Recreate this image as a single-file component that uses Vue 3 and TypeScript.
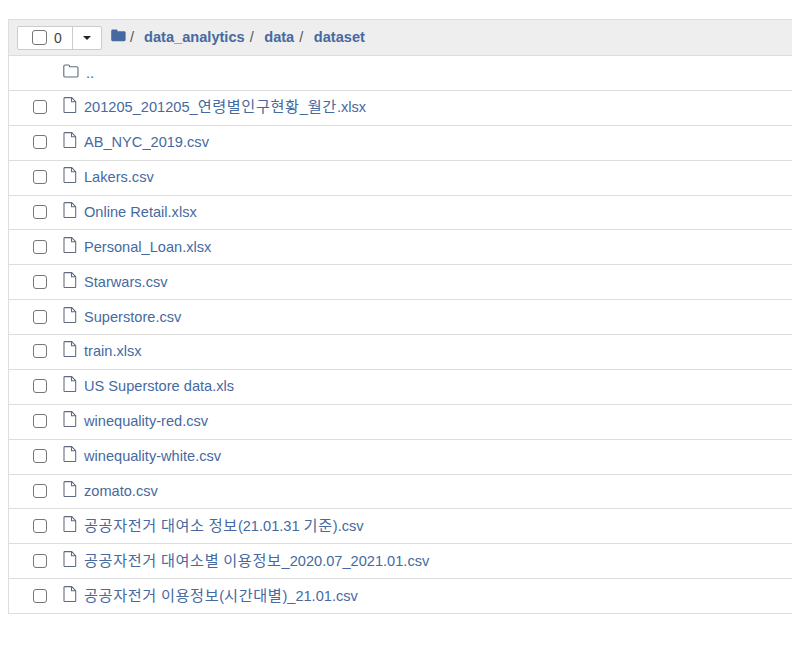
<template>
  <div class="page">
    <div class="tree-list">
      <div class="list-header">
        <div class="select-box">
          <span class="select-count">
            <span class="check big"></span>
            <span class="count">0</span>
          </span>
          <span class="select-caret"><i class="caret"></i></span>
        </div>
        <div class="crumbs">
          <svg class="crumb-icon" viewBox="0 0 15 13" width="15" height="13">
            <path d="M1.6 .5h3.6c.8 0 1.4.6 1.4 1.4v.3h6.6c.8 0 1.4.6 1.4 1.4v7.2c0 .8-.6 1.4-1.4 1.4H1.6C.8 12.2.2 11.6.2 10.8V1.9C.2 1.1.8.5 1.6.5z" fill="#466a9f" />
          </svg>
          <span class="slash first">/</span>
          <template v-for="(part, i) in crumbs" :key="part">
            <a class="crumb">{{ part }}</a>
            <span v-if="i < crumbs.length - 1" class="slash">/</span>
          </template>
        </div>
      </div>

      <div class="row">
        <span class="check-cell"></span>
        <svg class="item-icon folder" viewBox="0 0 16 14" width="16" height="14">
          <path d="M2 1h3.4c.7 0 1.2.5 1.2 1.2v.6h7.2c.7 0 1.2.5 1.2 1.2v7.8c0 .7-.5 1.2-1.2 1.2H2c-.7 0-1.2-.5-1.2-1.2V2.2C.8 1.5 1.3 1 2 1z" fill="none" stroke="#5b6b7c" stroke-width="1.1" />
        </svg>
        <a class="name up">..</a>
      </div>

      <div v-for="file in files" :key="file" class="row">
        <span class="check-cell"><span class="check"></span></span>
        <svg class="item-icon" viewBox="0 0 14 16" width="14" height="16">
          <path d="M1.5 .6h7.2l4 4v10.3a.5.5 0 0 1-.5.5H1.5a.5.5 0 0 1-.5-.5V1.1a.5.5 0 0 1 .5-.5z M8.5 .8v4h4" fill="none" stroke="#5f6a80" stroke-width="1.05" />
        </svg>
        <a class="name">
          <span v-for="(seg, i) in splitName(file)" :key="i" :class="{ ko: seg.ko }">{{ seg.text }}</span>
        </a>
      </div>
    </div>
  </div>
</template>

<script setup lang="ts">
interface Segment {
  text: string
  ko: boolean
}

const crumbs: string[] = ['data_analytics', 'data', 'dataset']

// file names as listed in the folder
const files: string[] = [
  '201205_201205_연령별인구현황_월간.xlsx',
  'AB_NYC_2019.csv',
  'Lakers.csv',
  'Online Retail.xlsx',
  'Personal_Loan.xlsx',
  'Starwars.csv',
  'Superstore.csv',
  'train.xlsx',
  'US Superstore data.xls',
  'winequality-red.csv',
  'winequality-white.csv',
  'zomato.csv',
  '공공자전거 대여소 정보(21.01.31 기준).csv',
  '공공자전거 대여소별 이용정보_2020.07_2021.01.csv',
  '공공자전거 이용정보(시간대별)_21.01.csv',
]

// hangul runs get their own span, they are set wider than the latin text
function splitName(name: string): Segment[] {
  const parts = name.match(/[\uac00-\ud7a3]+|[^\uac00-\ud7a3]+/g) ?? []
  return parts.map((text) => ({ text, ko: /[\uac00-\ud7a3]/.test(text) }))
}
</script>

<style>
html,
body {
  margin: 0;
  background: #fff;
  overflow: hidden;
}
</style>

<style scoped>
.page {
  height: 661px;
  padding: 19px 0 0 8px;
  box-sizing: border-box;
  overflow: hidden;
  font-family: "Liberation Sans", "Noto Sans CJK KR", sans-serif;
  font-size: 14.6px;
  color: #000;
}

.tree-list {
  border: 1px solid #ddd;
  border-right: none;
}

.list-header {
  display: flex;
  align-items: center;
  height: 35px;
  background: #eee;
  box-sizing: border-box;
  padding-left: 8px;
}

.select-box {
  display: flex;
  height: 24px;
  background: #fff;
  border: 1px solid #ccc;
  border-radius: 2px;
  box-sizing: border-box;
}

.select-count {
  display: flex;
  align-items: center;
  width: 55px;
  padding-left: 14px;
  box-sizing: border-box;
  border-right: 1px solid #ccc;
}

.count {
  margin-left: 7px;
  font-size: 14px;
  color: #444;
}

.select-caret {
  display: flex;
  align-items: center;
  justify-content: center;
  width: 28px;
}

.caret {
  width: 0;
  height: 0;
  border-top: 4px solid #222;
  border-left: 4px solid transparent;
  border-right: 4px solid transparent;
}

.crumbs {
  display: flex;
  align-items: center;
  margin-left: 9px;
  margin-top: -1px;
  font-weight: 700;
  color: #466a9f;
}

.crumb-icon {
  margin-bottom: 3px;
}

.slash {
  font-weight: 400;
  color: #555;
  margin: 0 10.5px 0 5px;
}

.slash.first {
  margin: 0 10px 0 4px;
}

.row {
  display: flex;
  align-items: center;
  height: 34.875px;
  box-sizing: border-box;
  border-top: 1px solid #ddd;
}

.check-cell {
  display: flex;
  justify-content: center;
  width: 54px;
  padding-left: 8px;
  padding-right: 1px;
  box-sizing: border-box;
}

.check {
  display: block;
  width: 14px;
  height: 14px;
  background: #fff;
  border: 1px solid #767676;
  border-radius: 3px;
  box-sizing: border-box;
  margin-bottom: 1px;
}

.check.big {
  width: 15px;
  height: 15px;
  margin-bottom: 0;
}

.item-icon {
  flex: none;
  margin-bottom: 5px;
}

.item-icon.folder {
  margin-bottom: 3px;
}

.name {
  margin-left: 7px;
  margin-bottom: 1px;
  color: #466a9f;
  white-space: nowrap;
}

.name.up {
  margin-left: 7px;
  margin-bottom: 0;
}

.ko {
  font-size: 15.2px;
  letter-spacing: 0.6px;
  line-height: 1;
}
</style>
